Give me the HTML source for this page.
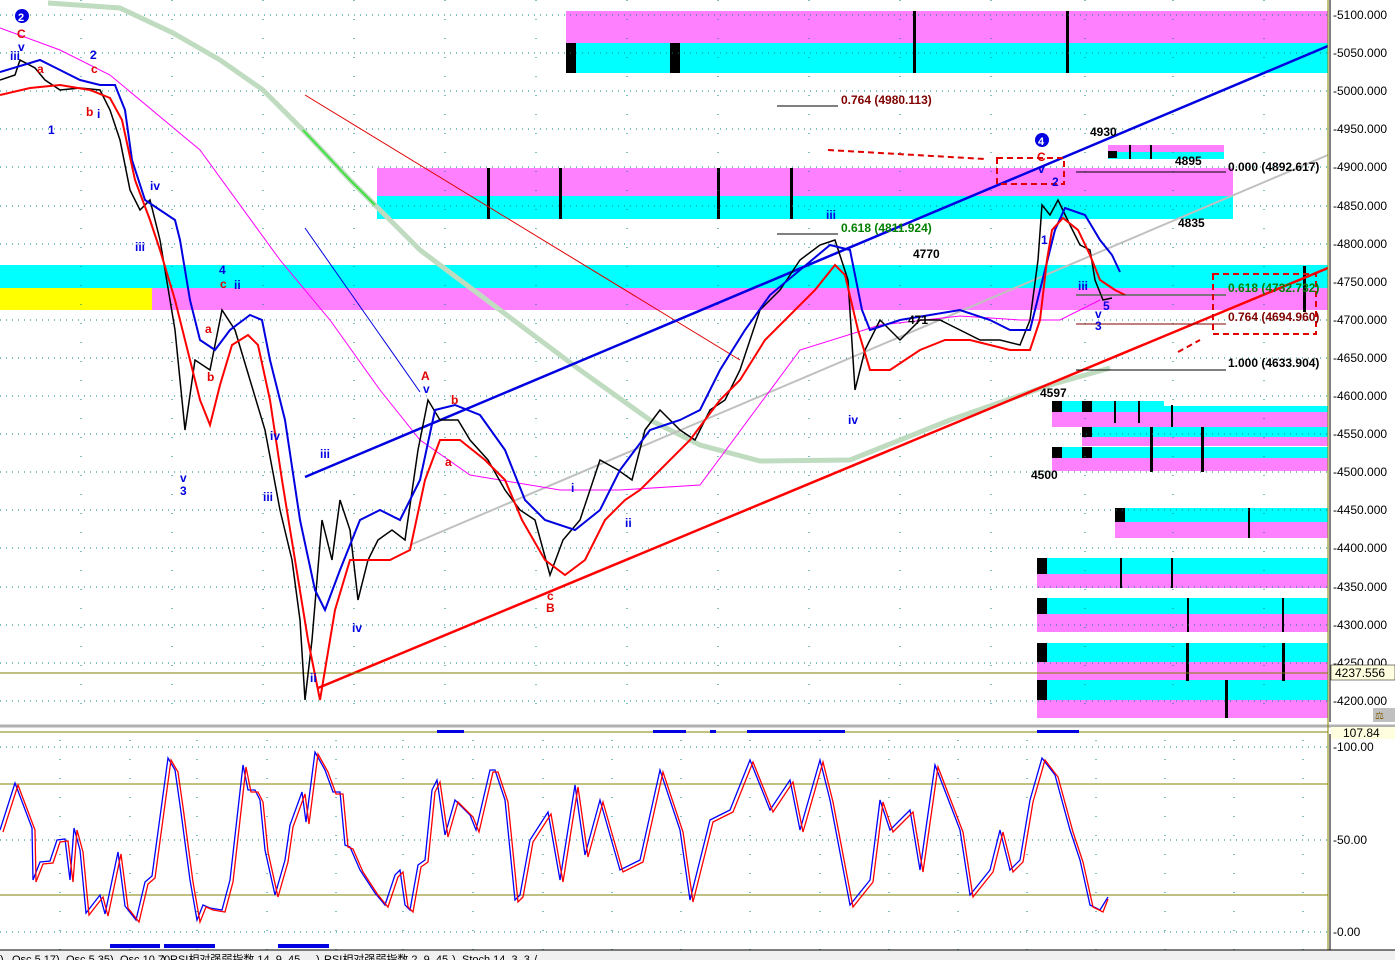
<!DOCTYPE html>
<html><head><meta charset="utf-8"><style>
html,body{margin:0;padding:0;background:#fff;}
svg{display:block;font-family:"Liberation Sans",sans-serif;}
</style></head><body>
<svg width="1395" height="960" viewBox="0 0 1395 960" xmlns="http://www.w3.org/2000/svg">
<rect width="1395" height="960" fill="#fff"/>
<!-- boxes -->
<rect x="566" y="11" width="762" height="32" fill="#ff80ff"/>
<rect x="566" y="43" width="762" height="30" fill="#00ffff"/>
<rect x="377" y="168" width="856" height="28" fill="#ff80ff"/>
<rect x="377" y="196" width="856" height="23" fill="#00ffff"/>
<rect x="0" y="265" width="1328" height="23" fill="#00ffff"/>
<rect x="0" y="288" width="1328" height="22" fill="#ff80ff"/>
<rect x="0" y="288" width="152" height="22" fill="#ffff00"/>
<rect x="1108" y="145" width="116" height="7" fill="#ff80ff"/>
<rect x="1108" y="152" width="116" height="7" fill="#00ffff"/>
<rect x="1108" y="151" width="9" height="7" fill="#000"/>
<rect x="1052" y="401" width="112" height="11" fill="#00ffff"/>
<rect x="1161" y="406" width="167" height="10" fill="#00ffff"/>
<rect x="1052" y="412" width="276" height="15" fill="#ff80ff"/>
<rect x="1082" y="427" width="246" height="10" fill="#00ffff"/>
<rect x="1082" y="437" width="246" height="9" fill="#ff80ff"/>
<rect x="1052" y="447" width="276" height="11" fill="#00ffff"/>
<rect x="1052" y="458" width="276" height="13" fill="#ff80ff"/>
<rect x="1115" y="508" width="213" height="14" fill="#00ffff"/>
<rect x="1115" y="522" width="213" height="16" fill="#ff80ff"/>
<rect x="1037" y="558" width="291" height="16" fill="#00ffff"/>
<rect x="1037" y="574" width="291" height="14" fill="#ff80ff"/>
<rect x="1037" y="598" width="291" height="16" fill="#00ffff"/>
<rect x="1037" y="614" width="291" height="18" fill="#ff80ff"/>
<rect x="1037" y="643" width="291" height="19" fill="#00ffff"/>
<rect x="1037" y="662" width="291" height="18" fill="#ff80ff"/>
<rect x="1037" y="680" width="291" height="20" fill="#00ffff"/>
<rect x="1037" y="700" width="291" height="18" fill="#ff80ff"/>
<g fill="#000">
<rect x="566" y="43" width="10" height="30"/><rect x="670" y="43" width="10" height="30"/>
<rect x="1052" y="401" width="10" height="11"/><rect x="1082" y="401" width="10" height="11"/>
<rect x="1082" y="427" width="10" height="10"/><rect x="1052" y="447" width="10" height="11"/><rect x="1082" y="447" width="10" height="11"/>
<rect x="1115" y="508" width="10" height="14"/>
<rect x="1037" y="558" width="10" height="16"/><rect x="1037" y="598" width="10" height="16"/><rect x="1037" y="643" width="10" height="19"/><rect x="1037" y="680" width="10" height="20"/>
<rect x="913" y="11" width="3" height="62"/><rect x="1066" y="11" width="3" height="62"/>
<rect x="487" y="168" width="3" height="51"/><rect x="559" y="168" width="3" height="51"/><rect x="717" y="168" width="3" height="51"/><rect x="790" y="168" width="3" height="51"/>
<rect x="1129" y="145" width="2" height="14"/><rect x="1150" y="145" width="2" height="14"/>
<rect x="1114" y="401" width="2" height="22"/><rect x="1138" y="401" width="2" height="22"/><rect x="1171" y="405" width="2" height="22"/>
<rect x="1150" y="427" width="3" height="45"/><rect x="1201" y="427" width="3" height="45"/>
<rect x="1248" y="508" width="2" height="30"/><rect x="1120" y="558" width="2" height="30"/><rect x="1171" y="558" width="2" height="30"/>
<rect x="1187" y="598" width="2" height="34"/><rect x="1282" y="598" width="2" height="34"/>
<rect x="1186" y="643" width="3" height="38"/><rect x="1282" y="643" width="3" height="38"/><rect x="1225" y="680" width="3" height="38"/>
<rect x="1303" y="266" width="3" height="46"/>
</g>
<!-- grid -->
<g stroke="#008080" stroke-width="1" stroke-dasharray="1,5">
<line x1="0" y1="15" x2="1328" y2="15"/><line x1="0" y1="53" x2="1328" y2="53"/><line x1="0" y1="91" x2="1328" y2="91"/><line x1="0" y1="129" x2="1328" y2="129"/><line x1="0" y1="167" x2="1328" y2="167"/><line x1="0" y1="206" x2="1328" y2="206"/><line x1="0" y1="244" x2="1328" y2="244"/><line x1="0" y1="320" x2="1328" y2="320"/><line x1="0" y1="358" x2="1328" y2="358"/><line x1="0" y1="396" x2="1328" y2="396"/><line x1="0" y1="434" x2="1328" y2="434"/><line x1="0" y1="472" x2="1328" y2="472"/><line x1="0" y1="510" x2="1328" y2="510"/><line x1="0" y1="548" x2="1328" y2="548"/><line x1="0" y1="587" x2="1328" y2="587"/><line x1="0" y1="625" x2="1328" y2="625"/><line x1="0" y1="663" x2="1328" y2="663"/><line x1="0" y1="701" x2="1328" y2="701"/>
<line x1="0" y1="747" x2="1328" y2="747"/><line x1="0" y1="840" x2="1328" y2="840"/><line x1="0" y1="932" x2="1328" y2="932"/>
</g>
<g stroke="#008080" stroke-width="1" stroke-dasharray="1,18">
<line x1="81" y1="0" x2="81" y2="722"/><line x1="172" y1="0" x2="172" y2="722"/><line x1="263" y1="0" x2="263" y2="722"/><line x1="354" y1="0" x2="354" y2="722"/><line x1="445" y1="0" x2="445" y2="722"/><line x1="536" y1="0" x2="536" y2="722"/><line x1="627" y1="0" x2="627" y2="722"/><line x1="718" y1="0" x2="718" y2="722"/><line x1="809" y1="0" x2="809" y2="722"/><line x1="900" y1="0" x2="900" y2="722"/><line x1="991" y1="0" x2="991" y2="722"/><line x1="1085" y1="0" x2="1085" y2="722"/><line x1="1173" y1="0" x2="1173" y2="722"/><line x1="1264" y1="0" x2="1264" y2="722"/>
<line x1="60" y1="740" x2="60" y2="950"/><line x1="130" y1="740" x2="130" y2="950"/><line x1="197" y1="740" x2="197" y2="950"/><line x1="267" y1="740" x2="267" y2="950"/><line x1="336" y1="740" x2="336" y2="950"/><line x1="403" y1="740" x2="403" y2="950"/><line x1="473" y1="740" x2="473" y2="950"/><line x1="543" y1="740" x2="543" y2="950"/><line x1="612" y1="740" x2="612" y2="950"/><line x1="681" y1="740" x2="681" y2="950"/><line x1="750" y1="740" x2="750" y2="950"/><line x1="820" y1="740" x2="820" y2="950"/><line x1="889" y1="740" x2="889" y2="950"/><line x1="958" y1="740" x2="958" y2="950"/><line x1="1027" y1="740" x2="1027" y2="950"/><line x1="1096" y1="740" x2="1096" y2="950"/><line x1="1165" y1="740" x2="1165" y2="950"/><line x1="1234" y1="740" x2="1234" y2="950"/><line x1="1303" y1="740" x2="1303" y2="950"/>
</g>
<!-- curves -->
<path d="M48,3 L120,8 173,33 220,60 263,90 303,130 350,180 420,250 500,310 580,370 650,420 700,445 760,461 850,460 950,420 1050,385 1110,368" fill="none" stroke="#c0dcc0" stroke-width="5"/>
<path d="M303,130 L350,180 375,205" fill="none" stroke="#40e040" stroke-width="2"/>
<line x1="305" y1="95" x2="740" y2="360" stroke="#e00000" stroke-width="1"/>
<line x1="305" y1="228" x2="420" y2="392" stroke="#0000e0" stroke-width="1"/>
<line x1="410" y1="545" x2="1328" y2="155" stroke="#c0c0c0" stroke-width="2"/>
<path d="M0,28 L60,50 110,75 200,150 280,260 330,320 380,390 420,440 470,475 560,490 620,490 700,485 800,350 880,325 960,316 1020,320 1060,320 1100,300" fill="none" stroke="#ff00ff" stroke-width="1"/>
<line x1="305" y1="477" x2="1328" y2="46" stroke="#0000e0" stroke-width="2.5"/>
<line x1="318" y1="688" x2="1328" y2="268" stroke="#ff0000" stroke-width="2.5"/>
<line x1="0" y1="673" x2="1328" y2="673" stroke="#808000" stroke-width="1"/>
<!-- price -->
<path d="M0,80 L15,75 20,60 35,68 45,80 60,90 80,88 100,90 110,110 120,140 130,190 140,210 150,200 160,240 175,330 185,430 195,360 210,370 222,310 235,330 250,380 265,430 280,510 292,560 300,620 305,700 312,640 322,520 332,560 340,500 350,530 358,600 368,560 378,540 392,530 405,540 418,450 428,400 440,420 458,420 470,440 488,460 505,490 520,510 535,520 550,575 563,540 580,520 600,460 618,470 632,480 645,430 660,410 680,430 695,440 710,410 725,400 740,370 760,310 780,290 800,260 820,245 835,240 848,280 855,390 865,350 880,320 900,340 920,320 940,320 960,330 980,340 1000,340 1020,345 1030,320 1038,260 1042,205 1050,215 1058,200 1070,225 1080,245 1090,250 1095,280 1103,300 1112,298" fill="none" stroke="#000" stroke-width="1.5"/>
<path d="M0,72 L30,63 40,60 60,70 80,80 100,85 115,85 125,110 132,160 145,200 160,210 175,220 180,240 190,300 200,340 215,350 230,330 250,315 262,320 270,360 285,420 300,520 315,590 325,610 340,570 360,520 380,510 400,520 420,480 435,410 455,405 480,415 505,450 525,500 545,520 575,530 600,510 620,470 650,430 680,420 700,410 720,370 745,330 770,295 800,270 830,245 850,250 862,310 870,330 900,320 930,315 960,310 990,320 1010,330 1030,330 1045,270 1055,230 1065,208 1085,215 1100,240 1112,255 1120,272" fill="none" stroke="#0000e0" stroke-width="2"/>
<path d="M0,95 L30,88 60,85 90,90 110,98 122,120 135,180 150,220 160,250 175,300 190,360 200,400 210,425 220,385 232,345 248,335 258,345 270,400 282,480 295,560 308,640 320,700 335,610 350,560 370,560 390,560 410,550 425,480 440,440 460,440 485,460 505,480 522,520 545,560 565,575 585,560 605,520 625,500 640,490 660,470 690,440 720,400 740,380 765,340 790,315 815,290 835,265 845,275 858,330 870,370 890,370 920,350 945,340 970,340 990,345 1010,350 1030,350 1040,320 1047,260 1052,230 1063,218 1078,230 1090,255 1100,280 1115,290 1125,295" fill="none" stroke="#ff0000" stroke-width="2"/>
<!-- fib lines -->
<g stroke-width="1">
<line x1="777" y1="106" x2="838" y2="106" stroke="#000"/>
<line x1="777" y1="234" x2="838" y2="234" stroke="#000"/>
<line x1="1076" y1="172" x2="1226" y2="172" stroke="#000"/>
<line x1="1076" y1="295" x2="1226" y2="295" stroke="#006000"/>
<line x1="1076" y1="324" x2="1226" y2="324" stroke="#800000"/>
<line x1="1076" y1="370" x2="1226" y2="370" stroke="#000"/>
</g>
<g fill="none" stroke="#e00000" stroke-width="2" stroke-dasharray="6,4">
<rect x="997" y="158" width="67" height="26"/>
<rect x="1213" y="274" width="103" height="60"/>
<path d="M828,150 L985,159"/><path d="M1178,352 L1200,340"/>
</g>
<!-- labels -->
<g font-weight="bold" font-size="12">
<text x="841" y="104" fill="#800000">0.764 (4980.113)</text>
<text x="841" y="232" fill="#008000">0.618 (4811.924)</text>
<text x="1228" y="171" fill="#000">0.000 (4892.617)</text>
<text x="1228" y="292" fill="#008000">0.618 (4732.732)</text>
<text x="1228" y="321" fill="#800000">0.764 (4694.960)</text>
<text x="1228" y="367" fill="#000">1.000 (4633.904)</text>
<text x="1090" y="136" fill="#000">4930</text>
<text x="1175" y="165" fill="#000">4895</text>
<text x="1178" y="227" fill="#000">4835</text>
<text x="913" y="258" fill="#000">4770</text>
<text x="1040" y="397" fill="#000">4597</text>
<text x="1031" y="479" fill="#000">4500</text>
<text x="908" y="324" fill="#000">471</text>
</g>
<g font-weight="bold" font-size="12" fill="#0000e0">
<text x="10" y="60">iii</text><text x="18" y="51">v</text><text x="48" y="134">1</text><text x="90" y="59">2</text><text x="97" y="118">i</text><text x="135" y="251">iii</text><text x="150" y="190">iv</text><text x="180" y="482">v</text><text x="180" y="495">3</text><text x="219" y="274">4</text><text x="234" y="289">ii</text><text x="263" y="501">iii</text><text x="270" y="440">iv</text><text x="310" y="682">ii</text><text x="320" y="458">iii</text><text x="352" y="632">iv</text><text x="423" y="393">v</text><text x="571" y="492">i</text><text x="625" y="527">ii</text><text x="826" y="219">iii</text><text x="848" y="424">iv</text><text x="1041" y="244">1</text><text x="1078" y="290">iii</text><text x="1095" y="318">v</text><text x="1095" y="330">3</text><text x="1103" y="310">5</text><text x="1052" y="186">2</text><text x="1038" y="173">v</text>
</g>
<g font-weight="bold" font-size="12" fill="#e00000">
<text x="17" y="38">C</text><text x="37" y="73">a</text><text x="86" y="116">b</text><text x="91" y="73">c</text><text x="205" y="333">a</text><text x="220" y="288">c</text><text x="207" y="381">b</text><text x="421" y="380">A</text><text x="451" y="404">b</text><text x="445" y="466">a</text><text x="546" y="612">B</text><text x="547" y="600">c</text><text x="1037" y="161">C</text>
</g>
<circle cx="22" cy="16" r="7" fill="#0000e0"/><text x="18" y="21" font-size="11" font-weight="bold" fill="#fff">2</text>
<circle cx="1042" cy="140" r="7" fill="#0000e0"/><text x="1038" y="145" font-size="11" font-weight="bold" fill="#fff">4</text>
<!-- oscillator panel -->
<rect x="0" y="723" width="1328" height="7" fill="#fff"/>
<line x1="0" y1="726" x2="1395" y2="726" stroke="#b0b0b0" stroke-width="3"/>
<line x1="0" y1="732" x2="1328" y2="732" stroke="#808000"/>
<line x1="0" y1="784" x2="1328" y2="784" stroke="#808000"/>
<line x1="0" y1="895" x2="1328" y2="895" stroke="#808000"/>
<g fill="#0000e0"><rect x="437" y="730" width="27" height="3"/><rect x="653" y="730" width="33" height="3"/><rect x="710" y="730" width="6" height="3"/><rect x="747" y="730" width="98" height="3"/><rect x="1037" y="730" width="42" height="3"/>
<rect x="110" y="944" width="50" height="4"/><rect x="164" y="944" width="51" height="4"/><rect x="278" y="944" width="51" height="4"/></g>
<path d="M0,830 L15,783 32,828 33,880 40,862 50,861 57,840 65,839 70,880 74,828 80,850 86,913 100,895 105,914 118,852 125,906 136,920 145,882 152,876 168,758 175,770 180,805 190,880 197,920 203,905 210,908 222,910 230,880 243,765 248,790 255,790 260,800 265,850 275,895 285,860 290,825 302,792 306,822 315,752 325,770 333,792 340,792 345,845 350,847 360,870 375,893 385,905 395,875 400,870 405,905 410,910 418,865 425,860 432,790 437,780 445,835 455,800 460,805 470,815 476,830 490,770 495,770 505,800 515,900 520,895 530,840 548,812 560,880 575,785 585,855 600,800 610,835 620,870 640,860 660,770 680,830 690,900 710,820 730,810 750,760 770,810 790,780 800,830 820,760 830,800 850,905 870,880 880,800 890,830 910,810 920,870 935,765 960,830 970,895 990,870 1000,830 1010,870 1020,860 1030,800 1042,758 1055,775 1070,830 1080,860 1090,905 1100,910 1108,897" fill="none" stroke="#0000ff" stroke-width="1.3"/>
<g transform="translate(3,2)"><path d="M0,830 L15,783 32,828 33,880 40,862 50,861 57,840 65,839 70,880 74,828 80,850 86,913 100,895 105,914 118,852 125,906 136,920 145,882 152,876 168,758 175,770 180,805 190,880 197,920 203,905 210,908 222,910 230,880 243,765 248,790 255,790 260,800 265,850 275,895 285,860 290,825 302,792 306,822 315,752 325,770 333,792 340,792 345,845 350,847 360,870 375,893 385,905 395,875 400,870 405,905 410,910 418,865 425,860 432,790 437,780 445,835 455,800 460,805 470,815 476,830 490,770 495,770 505,800 515,900 520,895 530,840 548,812 560,880 575,785 585,855 600,800 610,835 620,870 640,860 660,770 680,830 690,900 710,820 730,810 750,760 770,810 790,780 800,830 820,760 830,800 850,905 870,880 880,800 890,830 910,810 920,870 935,765 960,830 970,895 990,870 1000,830 1010,870 1020,860 1030,800 1042,758 1055,775 1070,830 1080,860 1090,905 1100,910 1105,897" fill="none" stroke="#ff0000" stroke-width="1.3"/></g>
<!-- right axis -->
<rect x="1329" y="0" width="66" height="723" fill="#fff"/>
<rect x="1329" y="730" width="66" height="220" fill="#fff"/>
<line x1="1328" y1="0" x2="1328" y2="960" stroke="#808000"/>
<line x1="1330" y1="0" x2="1330" y2="722" stroke="#000"/>
<line x1="1330" y1="734" x2="1330" y2="960" stroke="#000"/>
<g font-size="12" fill="#000">
<text x="1333" y="19">-5100.000</text><text x="1333" y="57">-5050.000</text><text x="1333" y="95">-5000.000</text><text x="1333" y="133">-4950.000</text><text x="1333" y="171">-4900.000</text><text x="1333" y="210">-4850.000</text><text x="1333" y="248">-4800.000</text><text x="1333" y="286">-4750.000</text><text x="1333" y="324">-4700.000</text><text x="1333" y="362">-4650.000</text><text x="1333" y="400">-4600.000</text><text x="1333" y="438">-4550.000</text><text x="1333" y="476">-4500.000</text><text x="1333" y="514">-4450.000</text><text x="1333" y="552">-4400.000</text><text x="1333" y="591">-4350.000</text><text x="1333" y="629">-4300.000</text><text x="1333" y="667">-4250.000</text><text x="1333" y="705">-4200.000</text>
<text x="1333" y="751">-100.00</text><text x="1333" y="844">-50.00</text><text x="1333" y="936">-0.00</text>
</g>
<rect x="1331" y="665" width="64" height="15" fill="#ffffe0" stroke="#000" stroke-width="0.5"/>
<text x="1335" y="677" font-size="12">4237.556</text>
<rect x="1331" y="727" width="64" height="12" fill="#ffffe0"/>
<text x="1343" y="737" font-size="12">107.84</text>
<rect x="1373" y="708" width="22" height="14" fill="#c0c0c0"/><text x="1375" y="719" font-size="10" fill="#806000">⚖</text>
<!-- tabs -->
<rect x="0" y="950" width="1395" height="10" fill="#f0f0f0"/>
<line x1="0" y1="950" x2="1395" y2="950" stroke="#000"/>
<g font-size="11" fill="#000">
<text x="0" y="963">)</text><text x="12" y="963">Osc 5,17</text><text x="56" y="963">)</text><text x="66" y="963">Osc 5,35</text><text x="110" y="963">)</text><text x="120" y="963">Osc 10,70</text><text x="162" y="963">)</text><text x="170" y="963">RSI相对强弱指数 14, 9, 45</text><text x="316" y="963">)</text><text x="324" y="963">RSI相对强弱指数 2, 9, 45</text><text x="452" y="963">)</text><text x="462" y="963">Stoch 14, 3, 3</text><text x="534" y="963">/</text>
</g>
</svg>
</body></html>
